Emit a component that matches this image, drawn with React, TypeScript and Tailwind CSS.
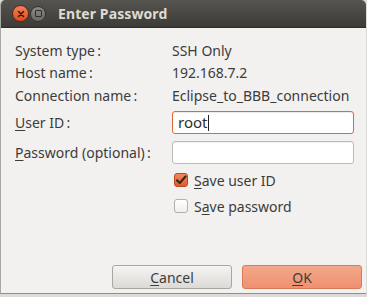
import React from "react";

const font = { fontFamily: '"Noto Sans", "Open Sans", sans-serif' };

function U({ c }: { c: string }) {
  return <span className="underline underline-offset-2 decoration-1">{c}</span>;
}

export default function App() {
  return (
    <div className="w-[367px] h-[297px] bg-[#dcdbd9] overflow-hidden" style={font}>
      <div className="w-[366px] h-[294px] flex flex-col bg-[#f2f1f0] border-l border-[#a8a7a4] border-b border-b-[#8f8e8b] rounded-t-[5px] overflow-hidden">
        {/* title bar */}
        <div className="h-[28px] shrink-0 flex items-center bg-gradient-to-b from-[#55544f] to-[#3c3b37] border-b border-[#2e2d29]">
          <div className="ml-[11px] w-[17px] h-[17px] rounded-full bg-gradient-to-b from-[#f58057] to-[#df4a16] border border-[#5a2a18] flex items-center justify-center">
            <svg width="8" height="8" viewBox="0 0 8 8">
              <path d="M1.5 1.5 L6.5 6.5 M6.5 1.5 L1.5 6.5" stroke="#3a1a0e" strokeWidth="1.6" strokeLinecap="round" />
            </svg>
          </div>
          <div className="ml-[1px] w-[16px] h-[16px] rounded-full bg-gradient-to-b from-[#8a8984] to-[#6a6965] border border-[#35342f] flex items-center justify-center">
            <div className="w-[7px] h-[7px] border-[1.5px] border-[#2e2d29] rounded-[1px]" />
          </div>
          <div className="ml-[12px] text-[14px] font-bold text-[#dfdbd2] tracking-[0.1px]">Enter Password</div>
        </div>

        {/* body */}
        <div className="flex-1 flex flex-col text-[14px] text-[#3c3c3c]">
          <div className="pl-[14px] pt-[11px] grid grid-cols-[157px_182px]">
            <div className="h-[22px] flex items-center">System type&#8201;:</div>
            <div className="h-[22px] flex items-center">SSH Only</div>
            <div className="h-[22px] flex items-center">Host name&#8201;:</div>
            <div className="h-[22px] flex items-center">192.168.7.2</div>
            <div className="h-[24px] flex items-center">Connection name&#8201;:</div>
            <div className="h-[24px] flex items-center whitespace-nowrap">Eclipse_to_BBB_connection</div>

            <div className="mt-[4px] h-[23px] flex items-center">
              <U c="U" />ser ID&#8201;:
            </div>
            <div className="mt-[4px] h-[23px] rounded-[3px] border border-[#e0673a] bg-white flex items-center pl-[5px] text-[15px] text-[#2e2e2e] shadow-[inset_0_1px_1px_rgba(0,0,0,0.08)]">
              root<span className="inline-block w-px h-[16px] bg-[#222] ml-[1px]" />
            </div>

            <div className="mt-[7px] h-[23px] flex items-center whitespace-nowrap">
              <U c="P" />assword (optional)&#8201;:
            </div>
            <div className="mt-[7px] h-[23px] rounded-[3px] border border-[#bdbab4] bg-white shadow-[inset_0_1px_1px_rgba(0,0,0,0.06)]" />

            <div className="mt-[5px]" />
            <div className="mt-[5px] h-[22px] flex items-center">
              <div className="ml-[2px] w-[14px] h-[14px] rounded-[3px] bg-gradient-to-b from-[#f08a5d] to-[#df5a27] border border-[#b9491f] flex items-center justify-center">
                <svg width="12" height="12" viewBox="0 0 12 12">
                  <path d="M2 6.2 L4.8 9 L10.5 2.5" fill="none" stroke="#3a2418" strokeWidth="2" strokeLinecap="round" strokeLinejoin="round" />
                </svg>
              </div>
              <div className="ml-[6px]">
                <U c="S" />ave user ID
              </div>
            </div>

            <div className="mt-[4px]" />
            <div className="mt-[4px] h-[22px] flex items-center">
              <div className="ml-[2px] w-[14px] h-[14px] rounded-[3px] bg-gradient-to-b from-[#ffffff] to-[#f0efed] border border-[#b3b0aa]" />
              <div className="ml-[6px]">
                S<U c="a" />ve password
              </div>
            </div>
          </div>

          <div className="mt-auto mb-[4px] flex justify-end gap-[10px] pr-[4px]">
            <button className="w-[120px] h-[24px] rounded-[3px] border border-[#a8a6a1] bg-gradient-to-b from-[#f5f4f3] to-[#dcdad6] text-[14px] text-[#3c3c3c] flex items-center justify-center">
              <span><U c="C" />ancel</span>
            </button>
            <button className="w-[120px] h-[24px] rounded-[3px] border border-[#d87a55] bg-gradient-to-b from-[#f4a88a] to-[#ee9170] text-[14px] text-[#3c3c3c] flex items-center justify-center">
              <span><U c="O" />K</span>
            </button>
          </div>
        </div>
      </div>
    </div>
  );
}
